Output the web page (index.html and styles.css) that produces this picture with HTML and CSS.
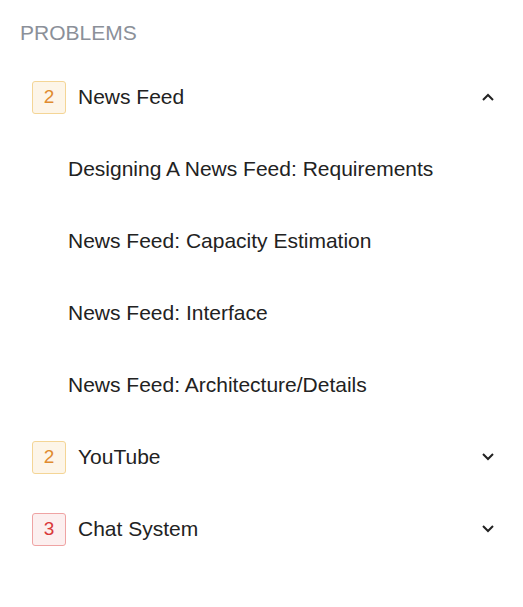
FILE: index.html
```html
<!DOCTYPE html>
<html>
<head>
<meta charset="utf-8">
<link rel="stylesheet" href="styles.css">
</head>
<body>
<div class="panel">
  <div class="title">PROBLEMS</div>
  <div class="row">
    <span class="badge orange">2</span>
    <span class="label">News Feed</span>
    <svg class="chev" width="12" height="8" viewBox="0 0 12 8"><path d="M1 7 L6 2 L11 7" fill="none" stroke="#222" stroke-width="2"/></svg>
  </div>
  <div class="sub">Designing A News Feed: Requirements</div>
  <div class="sub">News Feed: Capacity Estimation</div>
  <div class="sub">News Feed: Interface</div>
  <div class="sub">News Feed: Architecture/Details</div>
  <div class="row">
    <span class="badge orange">2</span>
    <span class="label">YouTube</span>
    <svg class="chev" width="12" height="8" viewBox="0 0 12 8"><path d="M1 1 L6 6 L11 1" fill="none" stroke="#222" stroke-width="2"/></svg>
  </div>
  <div class="row">
    <span class="badge red">3</span>
    <span class="label">Chat System</span>
    <svg class="chev" width="12" height="8" viewBox="0 0 12 8"><path d="M1 1 L6 6 L11 1" fill="none" stroke="#222" stroke-width="2"/></svg>
  </div>
</div>
</body>
</html>
```
FILE: styles.css
```css
body {
  margin: 0;
  background: #fff;
  font-family: "Liberation Sans", Arial, sans-serif;
}
.panel {
  padding: 20px 28px 0 20px;
}
.title {
  font-size: 21px;
  line-height: 26px;
  color: #8b9099;
  margin-bottom: 15px;
}
.row {
  height: 72px;
  display: flex;
  align-items: center;
  padding-left: 12px;
}
.badge {
  width: 32px;
  height: 31px;
  border: 1px solid;
  border-radius: 3px;
  display: flex;
  align-items: center;
  justify-content: center;
  font-size: 19px;
  box-sizing: content-box;
}
.orange {
  background: #fdf5e8;
  border-color: #f4d596;
  color: #e08b2f;
}
.red {
  background: #fcefef;
  border-color: #efa3a3;
  color: #d9383a;
}
.label {
  margin-left: 12px;
  font-size: 21px;
  color: #222;
  flex: 1;
}
.chev {
  margin-right: 1px;
}
.sub {
  height: 72px;
  display: flex;
  align-items: center;
  padding-left: 48px;
  font-size: 21px;
  color: #222;
}
```
